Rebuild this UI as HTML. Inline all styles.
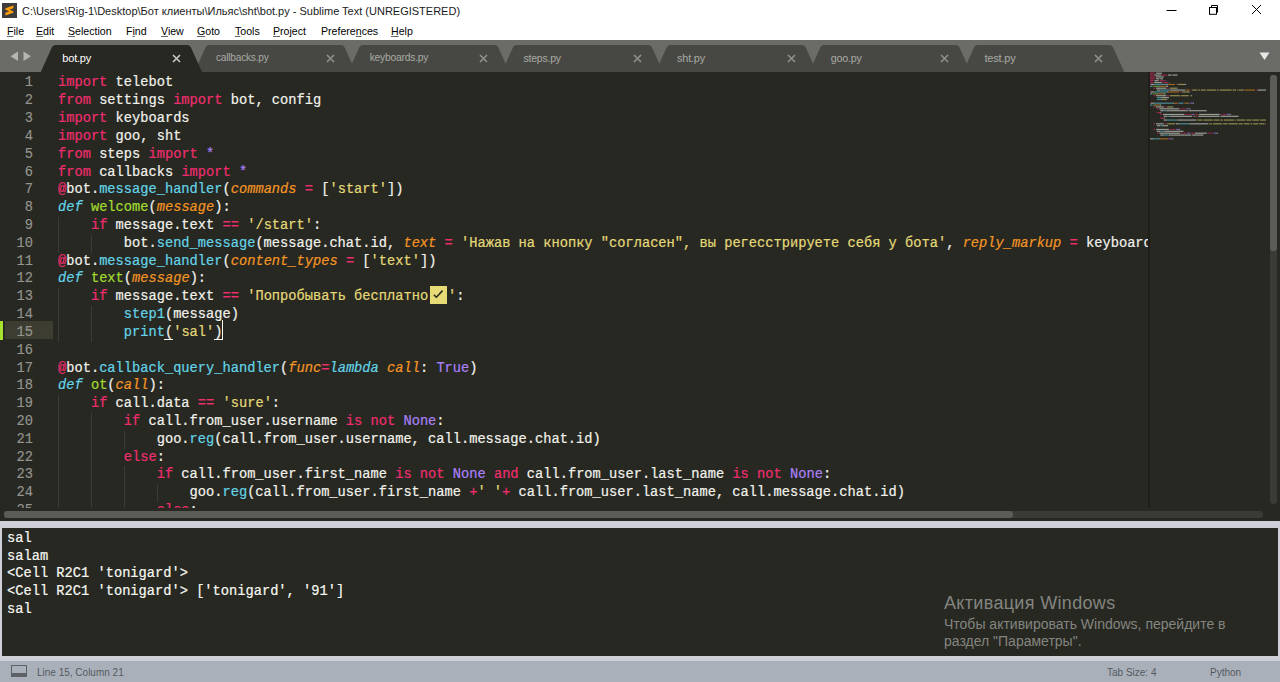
<!DOCTYPE html>
<html><head><meta charset="utf-8"><style>
*{margin:0;padding:0;box-sizing:border-box}
html,body{width:1280px;height:682px;overflow:hidden;background:#fff;position:relative;font-family:"Liberation Sans",sans-serif}
.abs{position:absolute}
#title{position:absolute;left:0;top:0;width:1280px;height:22px;background:#fff}
#ttxt{position:absolute;left:22px;top:4.5px;font-size:11px;color:#1a1a1a;white-space:nowrap}
#menu{position:absolute;left:0;top:22px;width:1280px;height:18px;background:#fff}
.mi{position:absolute;top:24.5px;font-size:10.6px;color:#000;white-space:nowrap}
.mi u{text-decoration:underline;text-decoration-color:#666;text-underline-offset:1px}
#tabbar{position:absolute;left:0;top:40px;width:1280px;height:32px;background:#6b6c67}
.tt{position:absolute;top:52px;font-size:11px;white-space:nowrap;letter-spacing:-0.2px}
.tx{position:absolute;top:53.5px}
#editor{position:absolute;left:0;top:72px;width:1280px;height:449px;background:#272822;overflow:hidden}
#code{position:absolute;left:0;top:0;width:1148px;height:436px;overflow:hidden}
.ln{position:absolute;left:58.0px;height:17.82px;line-height:17.82px;white-space:pre;font-family:"Liberation Mono",monospace;font-size:13.717px;color:#f8f8f2}
.ln{margin-top:-72px;-webkit-text-stroke:0.2px currentColor}
.num{position:absolute;left:0;width:33px;text-align:right;height:17.82px;line-height:17.82px;font-family:"Liberation Mono",monospace;font-size:13.717px;color:#95958f;margin-top:-72px;-webkit-text-stroke:0.15px currentColor}
.guide{position:absolute;width:1px;background:#3b3c37;margin-top:-72px}
.k{color:#ef2d6f} .s{color:#e4d978} .c{color:#aa80f8} .f{color:#a2dc30} .t{color:#64d4e8}
.d{color:#64d4e8;font-style:italic} .p{color:#f59524;font-style:italic} .n{color:#f2f2ec}
.chk{display:inline-block;width:20px;height:17px;vertical-align:top;position:relative}
.chk svg{position:absolute;left:1.5px;top:-2px;width:17.2px;height:17.5px;background:#e6db74}
#sep{position:absolute;left:0;top:521.7px;width:1280px;height:6px;background:#cdd1d7}
#out{position:absolute;left:2px;top:527.7px;width:1276px;height:128px;background:#272822;overflow:hidden}
#outwrap{position:absolute;left:0;top:521px;width:1280px;height:140px;background:#cdd1d7}
.oln{position:absolute;left:5px;height:17.82px;line-height:17.82px;white-space:pre;font-family:"Liberation Mono",monospace;font-size:13.717px;color:#f8f8f2;margin-top:-527.7px;-webkit-text-stroke:0.2px currentColor}
#status{position:absolute;left:0;top:661px;width:1280px;height:21px;background:#aab0b9}
.st{position:absolute;top:666.5px;font-size:10px;color:#555960;white-space:nowrap}
.wm{position:absolute;color:#84857f;white-space:nowrap}
</style></head><body>
<div id="title"></div>
<div class="abs" style="left:2px;top:3px;width:15px;height:15px;background:#3c3c3c"></div>
<svg class="abs" style="left:2px;top:3px" width="15" height="15" viewBox="0 0 15 15"><path d="M3.4 5.2 L11.4 2.4 L11.4 5.2 L7.6 6.6 L11.4 8.4 L11.4 9.8 L3.4 12.6 L3.4 9.8 L7.2 8.4 L3.4 6.6 Z" fill="#ff9d0a"/></svg>
<div id="ttxt">C:\Users\Rig-1\Desktop\Бот клиенты\Ильяс\sht\bot.py - Sublime Text (UNREGISTERED)</div>
<svg class="abs" style="left:1160px;top:3.6px" width="110" height="14" viewBox="0 0 110 14">
<path d="M6.5 6.5 H16.5" stroke="#000" stroke-width="1"/>
<rect x="49.5" y="3.5" width="7" height="6.8" fill="none" stroke="#000" stroke-width="1"/>
<path d="M51.5 3.5 V1.5 H57.5 V8.3 H56.5" fill="none" stroke="#000" stroke-width="1"/>
<path d="M92 1 L101 10 M101 1 L92 10" stroke="#000" stroke-width="1"/>
</svg>
<div id="menu"></div>
<div class="mi" style="left:7px"><u>F</u>ile</div><div class="mi" style="left:36px"><u>E</u>dit</div><div class="mi" style="left:68px"><u>S</u>election</div><div class="mi" style="left:126px">F<u>i</u>nd</div><div class="mi" style="left:161px"><u>V</u>iew</div><div class="mi" style="left:197px"><u>G</u>oto</div><div class="mi" style="left:235px"><u>T</u>ools</div><div class="mi" style="left:273px"><u>P</u>roject</div><div class="mi" style="left:321px">Prefere<u>n</u>ces</div><div class="mi" style="left:391px"><u>H</u>elp</div>
<div id="tabbar"></div>
<svg class="abs" style="left:0;top:0" width="1280" height="72" viewBox="0 0 1280 72">
<path d="M18 51.5 L10.5 56.3 L18 61 Z" fill="#b4b5b0"/>
<path d="M23.5 51.5 L31 56.3 L23.5 61 Z" fill="#b4b5b0"/>
<path d="M963.00 72 L973.80 48.00 Q975.00 45 978.00 45 L1109.20 45 Q1112.20 45 1113.40 48.00 L1124.20 72 Z" fill="#474843"/><path d="M809.30 72 L820.10 48.00 Q821.30 45 824.30 45 L955.50 45 Q958.50 45 959.70 48.00 L970.50 72 Z" fill="#474843"/><path d="M655.60 72 L666.40 48.00 Q667.60 45 670.60 45 L801.80 45 Q804.80 45 806.00 48.00 L816.80 72 Z" fill="#474843"/><path d="M501.90 72 L512.70 48.00 Q513.90 45 516.90 45 L648.10 45 Q651.10 45 652.30 48.00 L663.10 72 Z" fill="#474843"/><path d="M348.20 72 L359.00 48.00 Q360.20 45 363.20 45 L494.40 45 Q497.40 45 498.60 48.00 L509.40 72 Z" fill="#474843"/><path d="M194.50 72 L205.30 48.00 Q206.50 45 209.50 45 L340.70 45 Q343.70 45 344.90 48.00 L355.70 72 Z" fill="#474843"/><path d="M40.80 72 L51.60 48.00 Q52.80 45 55.80 45 L187.00 45 Q190.00 45 191.20 48.00 L202.00 72 Z" fill="#272822"/>
<path d="M1259.5 52.5 L1269.5 52.5 L1264.5 60 Z" fill="#e8e8e6"/>
</svg>
<div class="tt" style="left:62.3px;color:#ffffff;font-size:11.00px">bot.py</div><svg class="tx" style="left:171.8px" width="9" height="9" viewBox="0 0 9 9"><path d="M1 1L8 8M8 1L1 8" stroke="#c8c8c4" stroke-width="1.6"/></svg><div class="tt" style="left:216.0px;color:#a9aaa5;font-size:10.10px">callbacks.py</div><svg class="tx" style="left:325.5px" width="9" height="9" viewBox="0 0 9 9"><path d="M1 1L8 8M8 1L1 8" stroke="#8f908b" stroke-width="1.6"/></svg><div class="tt" style="left:369.7px;color:#a9aaa5;font-size:10.25px">keyboards.py</div><svg class="tx" style="left:479.2px" width="9" height="9" viewBox="0 0 9 9"><path d="M1 1L8 8M8 1L1 8" stroke="#8f908b" stroke-width="1.6"/></svg><div class="tt" style="left:523.4px;color:#a9aaa5;font-size:10.50px">steps.py</div><svg class="tx" style="left:632.9px" width="9" height="9" viewBox="0 0 9 9"><path d="M1 1L8 8M8 1L1 8" stroke="#8f908b" stroke-width="1.6"/></svg><div class="tt" style="left:677.1px;color:#a9aaa5;font-size:10.90px">sht.py</div><svg class="tx" style="left:786.6px" width="9" height="9" viewBox="0 0 9 9"><path d="M1 1L8 8M8 1L1 8" stroke="#8f908b" stroke-width="1.6"/></svg><div class="tt" style="left:830.8px;color:#a9aaa5;font-size:10.70px">goo.py</div><svg class="tx" style="left:940.3px" width="9" height="9" viewBox="0 0 9 9"><path d="M1 1L8 8M8 1L1 8" stroke="#8f908b" stroke-width="1.6"/></svg><div class="tt" style="left:984.5px;color:#a9aaa5;font-size:11.00px">test.py</div><svg class="tx" style="left:1094.0px" width="9" height="9" viewBox="0 0 9 9"><path d="M1 1L8 8M8 1L1 8" stroke="#8f908b" stroke-width="1.6"/></svg>
<div id="editor">
<div id="code">
<div class="guide" style="left:58.00px;top:216.96px;height:17.82px"></div><div class="guide" style="left:58.00px;top:234.78px;height:17.82px"></div><div class="guide" style="left:90.92px;top:234.78px;height:17.82px"></div><div class="guide" style="left:58.00px;top:288.24px;height:17.82px"></div><div class="guide" style="left:58.00px;top:306.06px;height:17.82px"></div><div class="guide" style="left:90.92px;top:306.06px;height:17.82px"></div><div class="guide" style="left:58.00px;top:323.88px;height:17.82px"></div><div class="guide" style="left:90.92px;top:323.88px;height:17.82px"></div><div class="guide" style="left:58.00px;top:395.16px;height:17.82px"></div><div class="guide" style="left:58.00px;top:412.98px;height:17.82px"></div><div class="guide" style="left:90.92px;top:412.98px;height:17.82px"></div><div class="guide" style="left:58.00px;top:430.80px;height:17.82px"></div><div class="guide" style="left:90.92px;top:430.80px;height:17.82px"></div><div class="guide" style="left:123.84px;top:430.80px;height:17.82px"></div><div class="guide" style="left:58.00px;top:448.62px;height:17.82px"></div><div class="guide" style="left:90.92px;top:448.62px;height:17.82px"></div><div class="guide" style="left:58.00px;top:466.44px;height:17.82px"></div><div class="guide" style="left:90.92px;top:466.44px;height:17.82px"></div><div class="guide" style="left:123.84px;top:466.44px;height:17.82px"></div><div class="guide" style="left:58.00px;top:484.26px;height:17.82px"></div><div class="guide" style="left:90.92px;top:484.26px;height:17.82px"></div><div class="guide" style="left:123.84px;top:484.26px;height:17.82px"></div><div class="guide" style="left:156.76px;top:484.26px;height:17.82px"></div><div class="guide" style="left:58.00px;top:502.08px;height:17.82px"></div><div class="guide" style="left:90.92px;top:502.08px;height:17.82px"></div><div class="guide" style="left:123.84px;top:502.08px;height:17.82px"></div>
<div class="abs" style="left:5px;top:249px;width:48px;height:18px;background:#3e3d32"></div>
<div class="abs" style="left:0;top:248.5px;width:3px;height:19px;background:#a6e22e"></div>
<div class="num" style="top:74.40px">1</div><div class="num" style="top:92.22px">2</div><div class="num" style="top:110.04px">3</div><div class="num" style="top:127.86px">4</div><div class="num" style="top:145.68px">5</div><div class="num" style="top:163.50px">6</div><div class="num" style="top:181.32px">7</div><div class="num" style="top:199.14px">8</div><div class="num" style="top:216.96px">9</div><div class="num" style="top:234.78px">10</div><div class="num" style="top:252.60px">11</div><div class="num" style="top:270.42px">12</div><div class="num" style="top:288.24px">13</div><div class="num" style="top:306.06px">14</div><div class="num" style="top:323.88px">15</div><div class="num" style="top:341.70px">16</div><div class="num" style="top:359.52px">17</div><div class="num" style="top:377.34px">18</div><div class="num" style="top:395.16px">19</div><div class="num" style="top:412.98px">20</div><div class="num" style="top:430.80px">21</div><div class="num" style="top:448.62px">22</div><div class="num" style="top:466.44px">23</div><div class="num" style="top:484.26px">24</div><div class="num" style="top:502.08px">25</div>
<div class="ln" style="top:74.40px"><span class="k">import</span><span class="n"> telebot</span></div><div class="ln" style="top:92.22px"><span class="k">from</span><span class="n"> settings </span><span class="k">import</span><span class="n"> bot, config</span></div><div class="ln" style="top:110.04px"><span class="k">import</span><span class="n"> keyboards</span></div><div class="ln" style="top:127.86px"><span class="k">import</span><span class="n"> goo, sht</span></div><div class="ln" style="top:145.68px"><span class="k">from</span><span class="n"> steps </span><span class="k">import</span><span class="n"> </span><span class="c">*</span></div><div class="ln" style="top:163.50px"><span class="k">from</span><span class="n"> callbacks </span><span class="k">import</span><span class="n"> </span><span class="c">*</span></div><div class="ln" style="top:181.32px"><span class="k">@</span><span class="n">bot.</span><span class="t">message_handler</span><span class="n">(</span><span class="p">commands</span><span class="n"> </span><span class="k">=</span><span class="n"> [</span><span class="s">'start'</span><span class="n">])</span></div><div class="ln" style="top:199.14px"><span class="d">def</span><span class="n"> </span><span class="f">welcome</span><span class="n">(</span><span class="p">message</span><span class="n">):</span></div><div class="ln" style="top:216.96px"><span class="n">    </span><span class="k">if</span><span class="n"> message.text </span><span class="k">==</span><span class="n"> </span><span class="s">'/start'</span><span class="n">:</span></div><div class="ln" style="top:234.78px"><span class="n">        bot.</span><span class="t">send_message</span><span class="n">(message.chat.id, </span><span class="p">text</span><span class="n"> </span><span class="k">=</span><span class="n"> </span><span class="s">'Нажав на кнопку "согласен", вы регесстрируете себя у бота'</span><span class="n">, </span><span class="p">reply_markup</span><span class="n"> </span><span class="k">=</span><span class="n"> keyboards.agree)</span></div><div class="ln" style="top:252.60px"><span class="k">@</span><span class="n">bot.</span><span class="t">message_handler</span><span class="n">(</span><span class="p">content_types</span><span class="n"> </span><span class="k">=</span><span class="n"> [</span><span class="s">'text'</span><span class="n">])</span></div><div class="ln" style="top:270.42px"><span class="d">def</span><span class="n"> </span><span class="f">text</span><span class="n">(</span><span class="p">message</span><span class="n">):</span></div><div class="ln" style="top:288.24px"><span class="n">    </span><span class="k">if</span><span class="n"> message.text </span><span class="k">==</span><span class="n"> </span><span class="s">'Попробывать бесплатно</span><span class="chk"><svg width="18" height="18" viewBox="0 0 18 18"><path d="M4.1 9.1 L6.7 11.6 L13.1 4.7" stroke="#2a2a22" stroke-width="1.6" fill="none"/></svg></span><span class="s">'</span><span class="n">:</span></div><div class="ln" style="top:306.06px"><span class="n">        </span><span class="t">step1</span><span class="n">(message)</span></div><div class="ln" style="top:323.88px"><span class="n">        </span><span class="t">print</span><span class="n">(</span><span class="s">'sal'</span><span class="n">)</span></div><div class="ln" style="top:341.70px"></div><div class="ln" style="top:359.52px"><span class="k">@</span><span class="n">bot.</span><span class="t">callback_query_handler</span><span class="n">(</span><span class="p">func</span><span class="k">=</span><span class="d">lambda</span><span class="n"> </span><span class="p">call</span><span class="n">: </span><span class="c">True</span><span class="n">)</span></div><div class="ln" style="top:377.34px"><span class="d">def</span><span class="n"> </span><span class="f">ot</span><span class="n">(</span><span class="p">call</span><span class="n">):</span></div><div class="ln" style="top:395.16px"><span class="n">    </span><span class="k">if</span><span class="n"> call.data </span><span class="k">==</span><span class="n"> </span><span class="s">'sure'</span><span class="n">:</span></div><div class="ln" style="top:412.98px"><span class="n">        </span><span class="k">if</span><span class="n"> call.from_user.username </span><span class="k">is</span><span class="n"> </span><span class="k">not</span><span class="n"> </span><span class="c">None</span><span class="n">:</span></div><div class="ln" style="top:430.80px"><span class="n">            goo.</span><span class="t">reg</span><span class="n">(call.from_user.username, call.message.chat.id)</span></div><div class="ln" style="top:448.62px"><span class="n">        </span><span class="k">else</span><span class="n">:</span></div><div class="ln" style="top:466.44px"><span class="n">            </span><span class="k">if</span><span class="n"> call.from_user.first_name </span><span class="k">is</span><span class="n"> </span><span class="k">not</span><span class="n"> </span><span class="c">None</span><span class="n"> </span><span class="k">and</span><span class="n"> call.from_user.last_name </span><span class="k">is</span><span class="n"> </span><span class="k">not</span><span class="n"> </span><span class="c">None</span><span class="n">:</span></div><div class="ln" style="top:484.26px"><span class="n">                goo.</span><span class="t">reg</span><span class="n">(call.from_user.first_name </span><span class="k">+</span><span class="s">' '</span><span class="k">+</span><span class="n"> call.from_user.last_name, call.message.chat.id)</span></div><div class="ln" style="top:502.08px"><span class="n">            </span><span class="k">else</span><span class="n">:</span></div>
<div class="abs" style="left:164px;top:267px;width:9px;height:1px;background:#f8f8f2"></div>
<div class="abs" style="left:213.5px;top:267px;width:9px;height:1px;background:#f8f8f2"></div>
<div class="abs" style="left:221.5px;top:248px;width:1px;height:20px;background:#f8f8f0"></div>
</div>
<div class="abs" style="left:1148px;top:0;width:2px;height:436px;background:#1e1f1a"></div>
<div class="abs" style="left:1269.5px;top:3px;width:7px;height:429px;background:#3a3b36;border-radius:3px"></div>
<div class="abs" style="left:1269.5px;top:3px;width:7px;height:176px;background:#5b5c57;border-radius:3px"></div>
<div class="abs" style="left:4px;top:439.4px;width:1258.5px;height:6.6px;background:#3a3b36;border-radius:3px"></div>
<div class="abs" style="left:4px;top:439.4px;width:1008.5px;height:6.6px;background:#5b5c57;border-radius:3px"></div>
</div>
<svg class="abs" style="left:0;top:0;opacity:0.55" width="1280" height="160"><defs><filter id="bl" x="-5%" y="-50%" width="110%" height="200%"><feGaussianBlur stdDeviation="0.45"/></filter></defs><g filter="url(#bl)"><rect x="1150.00" y="72.60" width="5.16" height="1.2" fill="#f92672"/><rect x="1156.02" y="72.60" width="6.02" height="1.2" fill="#f8f8f2"/><rect x="1150.00" y="74.47" width="3.44" height="1.2" fill="#f92672"/><rect x="1154.30" y="74.47" width="6.88" height="1.2" fill="#f8f8f2"/><rect x="1162.04" y="74.47" width="5.16" height="1.2" fill="#f92672"/><rect x="1168.06" y="74.47" width="3.44" height="1.2" fill="#f8f8f2"/><rect x="1172.36" y="74.47" width="5.16" height="1.2" fill="#f8f8f2"/><rect x="1150.00" y="76.35" width="5.16" height="1.2" fill="#f92672"/><rect x="1156.02" y="76.35" width="7.74" height="1.2" fill="#f8f8f2"/><rect x="1150.00" y="78.22" width="5.16" height="1.2" fill="#f92672"/><rect x="1156.02" y="78.22" width="3.44" height="1.2" fill="#f8f8f2"/><rect x="1160.32" y="78.22" width="2.58" height="1.2" fill="#f8f8f2"/><rect x="1150.00" y="80.10" width="3.44" height="1.2" fill="#f92672"/><rect x="1154.30" y="80.10" width="4.30" height="1.2" fill="#f8f8f2"/><rect x="1159.46" y="80.10" width="5.16" height="1.2" fill="#f92672"/><rect x="1165.48" y="80.10" width="0.86" height="1.2" fill="#ae81ff"/><rect x="1150.00" y="81.97" width="3.44" height="1.2" fill="#f92672"/><rect x="1154.30" y="81.97" width="7.74" height="1.2" fill="#f8f8f2"/><rect x="1162.90" y="81.97" width="5.16" height="1.2" fill="#f92672"/><rect x="1168.92" y="81.97" width="0.86" height="1.2" fill="#ae81ff"/><rect x="1150.00" y="83.85" width="0.86" height="1.2" fill="#f92672"/><rect x="1150.86" y="83.85" width="3.44" height="1.2" fill="#f8f8f2"/><rect x="1154.30" y="83.85" width="12.90" height="1.2" fill="#66d9ef"/><rect x="1167.20" y="83.85" width="0.86" height="1.2" fill="#f8f8f2"/><rect x="1168.06" y="83.85" width="6.88" height="1.2" fill="#fd971f"/><rect x="1175.80" y="83.85" width="0.86" height="1.2" fill="#f92672"/><rect x="1177.52" y="83.85" width="0.86" height="1.2" fill="#f8f8f2"/><rect x="1178.38" y="83.85" width="6.02" height="1.2" fill="#e6db74"/><rect x="1184.40" y="83.85" width="1.72" height="1.2" fill="#f8f8f2"/><rect x="1150.00" y="85.72" width="2.58" height="1.2" fill="#66d9ef"/><rect x="1153.44" y="85.72" width="6.02" height="1.2" fill="#a6e22e"/><rect x="1159.46" y="85.72" width="0.86" height="1.2" fill="#f8f8f2"/><rect x="1160.32" y="85.72" width="6.02" height="1.2" fill="#fd971f"/><rect x="1166.34" y="85.72" width="1.72" height="1.2" fill="#f8f8f2"/><rect x="1153.44" y="87.60" width="1.72" height="1.2" fill="#f92672"/><rect x="1156.02" y="87.60" width="10.32" height="1.2" fill="#f8f8f2"/><rect x="1167.20" y="87.60" width="1.72" height="1.2" fill="#f92672"/><rect x="1169.78" y="87.60" width="6.88" height="1.2" fill="#e6db74"/><rect x="1176.66" y="87.60" width="0.86" height="1.2" fill="#f8f8f2"/><rect x="1156.88" y="89.47" width="3.44" height="1.2" fill="#f8f8f2"/><rect x="1160.32" y="89.47" width="10.32" height="1.2" fill="#66d9ef"/><rect x="1170.64" y="89.47" width="14.62" height="1.2" fill="#f8f8f2"/><rect x="1186.12" y="89.47" width="3.44" height="1.2" fill="#fd971f"/><rect x="1190.42" y="89.47" width="0.86" height="1.2" fill="#f92672"/><rect x="1192.14" y="89.47" width="5.16" height="1.2" fill="#e6db74"/><rect x="1198.16" y="89.47" width="1.72" height="1.2" fill="#e6db74"/><rect x="1200.74" y="89.47" width="5.16" height="1.2" fill="#e6db74"/><rect x="1206.76" y="89.47" width="9.46" height="1.2" fill="#e6db74"/><rect x="1217.08" y="89.47" width="1.72" height="1.2" fill="#e6db74"/><rect x="1219.66" y="89.47" width="12.04" height="1.2" fill="#e6db74"/><rect x="1232.56" y="89.47" width="3.44" height="1.2" fill="#e6db74"/><rect x="1236.86" y="89.47" width="0.86" height="1.2" fill="#e6db74"/><rect x="1238.58" y="89.47" width="4.30" height="1.2" fill="#e6db74"/><rect x="1242.88" y="89.47" width="0.86" height="1.2" fill="#f8f8f2"/><rect x="1244.60" y="89.47" width="10.32" height="1.2" fill="#fd971f"/><rect x="1255.78" y="89.47" width="0.86" height="1.2" fill="#f92672"/><rect x="1257.50" y="89.47" width="8.50" height="1.2" fill="#f8f8f2"/><rect x="1150.00" y="91.35" width="0.86" height="1.2" fill="#f92672"/><rect x="1150.86" y="91.35" width="3.44" height="1.2" fill="#f8f8f2"/><rect x="1154.30" y="91.35" width="12.90" height="1.2" fill="#66d9ef"/><rect x="1167.20" y="91.35" width="0.86" height="1.2" fill="#f8f8f2"/><rect x="1168.06" y="91.35" width="11.18" height="1.2" fill="#fd971f"/><rect x="1180.10" y="91.35" width="0.86" height="1.2" fill="#f92672"/><rect x="1181.82" y="91.35" width="0.86" height="1.2" fill="#f8f8f2"/><rect x="1182.68" y="91.35" width="5.16" height="1.2" fill="#e6db74"/><rect x="1187.84" y="91.35" width="1.72" height="1.2" fill="#f8f8f2"/><rect x="1150.00" y="93.22" width="2.58" height="1.2" fill="#66d9ef"/><rect x="1153.44" y="93.22" width="3.44" height="1.2" fill="#a6e22e"/><rect x="1156.88" y="93.22" width="0.86" height="1.2" fill="#f8f8f2"/><rect x="1157.74" y="93.22" width="6.02" height="1.2" fill="#fd971f"/><rect x="1163.76" y="93.22" width="1.72" height="1.2" fill="#f8f8f2"/><rect x="1153.44" y="95.10" width="1.72" height="1.2" fill="#f92672"/><rect x="1156.02" y="95.10" width="10.32" height="1.2" fill="#f8f8f2"/><rect x="1167.20" y="95.10" width="1.72" height="1.2" fill="#f92672"/><rect x="1169.78" y="95.10" width="10.32" height="1.2" fill="#e6db74"/><rect x="1180.96" y="95.10" width="7.74" height="1.2" fill="#e6db74"/><rect x="1190.42" y="95.10" width="0.86" height="1.2" fill="#e6db74"/><rect x="1191.28" y="95.10" width="0.86" height="1.2" fill="#f8f8f2"/><rect x="1156.88" y="96.97" width="4.30" height="1.2" fill="#66d9ef"/><rect x="1161.18" y="96.97" width="7.74" height="1.2" fill="#f8f8f2"/><rect x="1156.88" y="98.85" width="4.30" height="1.2" fill="#66d9ef"/><rect x="1161.18" y="98.85" width="0.86" height="1.2" fill="#f8f8f2"/><rect x="1162.04" y="98.85" width="4.30" height="1.2" fill="#e6db74"/><rect x="1166.34" y="98.85" width="0.86" height="1.2" fill="#f8f8f2"/><rect x="1150.00" y="102.60" width="0.86" height="1.2" fill="#f92672"/><rect x="1150.86" y="102.60" width="3.44" height="1.2" fill="#f8f8f2"/><rect x="1154.30" y="102.60" width="18.92" height="1.2" fill="#66d9ef"/><rect x="1173.22" y="102.60" width="0.86" height="1.2" fill="#f8f8f2"/><rect x="1174.08" y="102.60" width="3.44" height="1.2" fill="#fd971f"/><rect x="1177.52" y="102.60" width="0.86" height="1.2" fill="#f92672"/><rect x="1178.38" y="102.60" width="5.16" height="1.2" fill="#66d9ef"/><rect x="1184.40" y="102.60" width="3.44" height="1.2" fill="#fd971f"/><rect x="1187.84" y="102.60" width="0.86" height="1.2" fill="#f8f8f2"/><rect x="1189.56" y="102.60" width="3.44" height="1.2" fill="#ae81ff"/><rect x="1193.00" y="102.60" width="0.86" height="1.2" fill="#f8f8f2"/><rect x="1150.00" y="104.47" width="2.58" height="1.2" fill="#66d9ef"/><rect x="1153.44" y="104.47" width="1.72" height="1.2" fill="#a6e22e"/><rect x="1155.16" y="104.47" width="0.86" height="1.2" fill="#f8f8f2"/><rect x="1156.02" y="104.47" width="3.44" height="1.2" fill="#fd971f"/><rect x="1159.46" y="104.47" width="1.72" height="1.2" fill="#f8f8f2"/><rect x="1153.44" y="106.35" width="1.72" height="1.2" fill="#f92672"/><rect x="1156.02" y="106.35" width="7.74" height="1.2" fill="#f8f8f2"/><rect x="1164.62" y="106.35" width="1.72" height="1.2" fill="#f92672"/><rect x="1167.20" y="106.35" width="5.16" height="1.2" fill="#e6db74"/><rect x="1172.36" y="106.35" width="0.86" height="1.2" fill="#f8f8f2"/><rect x="1156.88" y="108.22" width="1.72" height="1.2" fill="#f92672"/><rect x="1159.46" y="108.22" width="19.78" height="1.2" fill="#f8f8f2"/><rect x="1180.10" y="108.22" width="1.72" height="1.2" fill="#f92672"/><rect x="1182.68" y="108.22" width="2.58" height="1.2" fill="#f92672"/><rect x="1186.12" y="108.22" width="3.44" height="1.2" fill="#ae81ff"/><rect x="1189.56" y="108.22" width="0.86" height="1.2" fill="#f8f8f2"/><rect x="1160.32" y="110.10" width="3.44" height="1.2" fill="#f8f8f2"/><rect x="1163.76" y="110.10" width="2.58" height="1.2" fill="#66d9ef"/><rect x="1166.34" y="110.10" width="21.50" height="1.2" fill="#f8f8f2"/><rect x="1188.70" y="110.10" width="18.06" height="1.2" fill="#f8f8f2"/><rect x="1156.88" y="111.97" width="3.44" height="1.2" fill="#f92672"/><rect x="1160.32" y="111.97" width="0.86" height="1.2" fill="#f8f8f2"/><rect x="1160.32" y="113.85" width="1.72" height="1.2" fill="#f92672"/><rect x="1162.90" y="113.85" width="21.50" height="1.2" fill="#f8f8f2"/><rect x="1185.26" y="113.85" width="1.72" height="1.2" fill="#f92672"/><rect x="1187.84" y="113.85" width="2.58" height="1.2" fill="#f92672"/><rect x="1191.28" y="113.85" width="3.44" height="1.2" fill="#ae81ff"/><rect x="1195.58" y="113.85" width="2.58" height="1.2" fill="#f92672"/><rect x="1199.02" y="113.85" width="20.64" height="1.2" fill="#f8f8f2"/><rect x="1220.52" y="113.85" width="1.72" height="1.2" fill="#f92672"/><rect x="1223.10" y="113.85" width="2.58" height="1.2" fill="#f92672"/><rect x="1226.54" y="113.85" width="3.44" height="1.2" fill="#ae81ff"/><rect x="1229.98" y="113.85" width="0.86" height="1.2" fill="#f8f8f2"/><rect x="1163.76" y="115.72" width="3.44" height="1.2" fill="#f8f8f2"/><rect x="1167.20" y="115.72" width="2.58" height="1.2" fill="#66d9ef"/><rect x="1169.78" y="115.72" width="22.36" height="1.2" fill="#f8f8f2"/><rect x="1193.00" y="115.72" width="0.86" height="1.2" fill="#f92672"/><rect x="1193.86" y="115.72" width="0.86" height="1.2" fill="#e6db74"/><rect x="1195.58" y="115.72" width="0.86" height="1.2" fill="#e6db74"/><rect x="1196.44" y="115.72" width="0.86" height="1.2" fill="#f92672"/><rect x="1198.16" y="115.72" width="21.50" height="1.2" fill="#f8f8f2"/><rect x="1220.52" y="115.72" width="18.06" height="1.2" fill="#f8f8f2"/><rect x="1160.32" y="117.60" width="3.44" height="1.2" fill="#f92672"/><rect x="1163.76" y="117.60" width="0.86" height="1.2" fill="#f8f8f2"/><rect x="1163.76" y="119.47" width="3.44" height="1.2" fill="#f8f8f2"/><rect x="1167.20" y="119.47" width="10.32" height="1.2" fill="#66d9ef"/><rect x="1177.52" y="119.47" width="18.92" height="1.2" fill="#f8f8f2"/><rect x="1197.30" y="119.47" width="5.16" height="1.2" fill="#e6db74"/><rect x="1203.32" y="119.47" width="9.46" height="1.2" fill="#e6db74"/><rect x="1213.64" y="119.47" width="6.02" height="1.2" fill="#e6db74"/><rect x="1220.52" y="119.47" width="2.58" height="1.2" fill="#e6db74"/><rect x="1223.96" y="119.47" width="10.32" height="1.2" fill="#e6db74"/><rect x="1235.14" y="119.47" width="0.86" height="1.2" fill="#e6db74"/><rect x="1236.86" y="119.47" width="8.60" height="1.2" fill="#e6db74"/><rect x="1246.32" y="119.47" width="5.16" height="1.2" fill="#e6db74"/><rect x="1252.34" y="119.47" width="6.88" height="1.2" fill="#e6db74"/><rect x="1260.08" y="119.47" width="5.92" height="1.2" fill="#e6db74"/><rect x="1153.44" y="123.22" width="1.72" height="1.2" fill="#f92672"/><rect x="1156.02" y="123.22" width="7.74" height="1.2" fill="#f8f8f2"/><rect x="1164.62" y="123.22" width="1.72" height="1.2" fill="#f92672"/><rect x="1167.20" y="123.22" width="6.88" height="1.2" fill="#e6db74"/><rect x="1174.08" y="123.22" width="0.86" height="1.2" fill="#f8f8f2"/><rect x="1175.80" y="123.22" width="3.44" height="1.2" fill="#f8f8f2"/><rect x="1179.24" y="123.22" width="10.32" height="1.2" fill="#66d9ef"/><rect x="1189.56" y="123.22" width="18.92" height="1.2" fill="#f8f8f2"/><rect x="1209.34" y="123.22" width="2.58" height="1.2" fill="#e6db74"/><rect x="1212.78" y="123.22" width="9.46" height="1.2" fill="#e6db74"/><rect x="1223.10" y="123.22" width="4.30" height="1.2" fill="#e6db74"/><rect x="1228.26" y="123.22" width="9.46" height="1.2" fill="#e6db74"/><rect x="1238.58" y="123.22" width="4.30" height="1.2" fill="#e6db74"/><rect x="1243.74" y="123.22" width="6.02" height="1.2" fill="#e6db74"/><rect x="1250.62" y="123.22" width="1.72" height="1.2" fill="#e6db74"/><rect x="1253.20" y="123.22" width="5.16" height="1.2" fill="#e6db74"/><rect x="1259.22" y="123.22" width="4.30" height="1.2" fill="#e6db74"/><rect x="1263.52" y="123.22" width="0.86" height="1.2" fill="#f8f8f2"/><rect x="1265.24" y="123.22" width="0.76" height="1.2" fill="#fd971f"/><rect x="1156.88" y="125.10" width="3.44" height="1.2" fill="#f8f8f2"/><rect x="1160.32" y="125.10" width="2.58" height="1.2" fill="#66d9ef"/><rect x="1162.90" y="125.10" width="5.16" height="1.2" fill="#f8f8f2"/><rect x="1153.44" y="128.85" width="1.72" height="1.2" fill="#f92672"/><rect x="1156.02" y="128.85" width="12.90" height="1.2" fill="#f8f8f2"/><rect x="1169.78" y="128.85" width="1.72" height="1.2" fill="#f92672"/><rect x="1172.36" y="128.85" width="2.58" height="1.2" fill="#f92672"/><rect x="1175.80" y="128.85" width="3.44" height="1.2" fill="#ae81ff"/><rect x="1179.24" y="128.85" width="0.86" height="1.2" fill="#f8f8f2"/><rect x="1156.88" y="130.72" width="3.44" height="1.2" fill="#f8f8f2"/><rect x="1160.32" y="130.72" width="4.30" height="1.2" fill="#66d9ef"/><rect x="1164.62" y="130.72" width="18.92" height="1.2" fill="#f8f8f2"/><rect x="1156.88" y="132.60" width="1.72" height="1.2" fill="#f92672"/><rect x="1159.46" y="132.60" width="20.64" height="1.2" fill="#f8f8f2"/><rect x="1180.96" y="132.60" width="1.72" height="1.2" fill="#f92672"/><rect x="1183.54" y="132.60" width="2.58" height="1.2" fill="#f92672"/><rect x="1186.98" y="132.60" width="3.44" height="1.2" fill="#ae81ff"/><rect x="1191.28" y="132.60" width="2.58" height="1.2" fill="#f92672"/><rect x="1194.72" y="132.60" width="12.04" height="1.2" fill="#f8f8f2"/><rect x="1207.62" y="132.60" width="1.72" height="1.2" fill="#f92672"/><rect x="1210.20" y="132.60" width="2.58" height="1.2" fill="#f92672"/><rect x="1213.64" y="132.60" width="3.44" height="1.2" fill="#ae81ff"/><rect x="1217.08" y="132.60" width="0.86" height="1.2" fill="#f8f8f2"/><rect x="1160.32" y="134.47" width="3.44" height="1.2" fill="#f8f8f2"/><rect x="1163.76" y="134.47" width="5.16" height="1.2" fill="#66d9ef"/><rect x="1168.92" y="134.47" width="22.36" height="1.2" fill="#f8f8f2"/><rect x="1192.14" y="134.47" width="11.18" height="1.2" fill="#f8f8f2"/><rect x="1150.00" y="138.22" width="3.44" height="1.2" fill="#f8f8f2"/><rect x="1153.44" y="138.22" width="6.02" height="1.2" fill="#66d9ef"/><rect x="1159.46" y="138.22" width="0.86" height="1.2" fill="#f8f8f2"/><rect x="1160.32" y="138.22" width="7.74" height="1.2" fill="#fd971f"/><rect x="1168.06" y="138.22" width="0.86" height="1.2" fill="#f92672"/><rect x="1168.92" y="138.22" width="3.44" height="1.2" fill="#ae81ff"/><rect x="1172.36" y="138.22" width="0.86" height="1.2" fill="#f8f8f2"/></g></svg>
<div id="sep"></div><div id="outwrap"></div>
<div id="out"><div class="oln" style="top:529.70px">sal</div><div class="oln" style="top:547.52px">salam</div><div class="oln" style="top:565.34px">&lt;Cell R2C1 &#x27;tonigard&#x27;&gt;</div><div class="oln" style="top:583.16px">&lt;Cell R2C1 &#x27;tonigard&#x27;&gt; [&#x27;tonigard&#x27;, &#x27;91&#x27;]</div><div class="oln" style="top:600.98px">sal</div>
</div>
<div id="status"></div>
<svg class="abs" style="left:11px;top:665px" width="16" height="12" viewBox="0 0 16 12"><rect x="0.5" y="0.5" width="15" height="11" fill="none" stroke="#5e6166" stroke-width="1"/><rect x="1" y="8" width="14" height="3" fill="#5e6166"/></svg>
<div class="st" style="left:37px">Line 15, Column 21</div>
<div class="st" style="left:1107px">Tab Size: 4</div>
<div class="st" style="left:1210px">Python</div>
<div class="wm" style="left:944px;top:592.7px;font-size:18px;letter-spacing:0.33px">Активация Windows</div>
<div class="wm" style="left:944px;top:615.5px;font-size:14px">Чтобы активировать Windows, перейдите в</div>
<div class="wm" style="left:944px;top:633px;font-size:14px">раздел "Параметры".</div>
</body></html>
